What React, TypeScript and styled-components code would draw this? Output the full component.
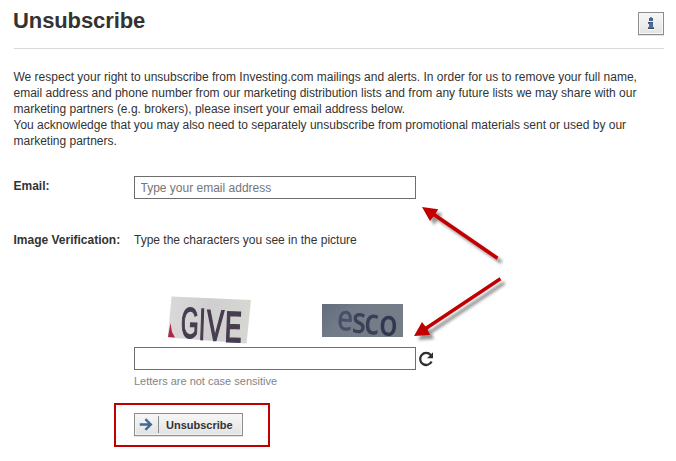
import React from "react";
import styled, { createGlobalStyle } from "styled-components";

const GlobalStyle = createGlobalStyle`
  * { box-sizing: border-box; }
  body {
    margin: 0;
    background: #fff;
    color: #333;
    font: 12px/16px "Liberation Sans", Arial, sans-serif;
  }
`;

const Page = styled.main`
  position: relative;
  width: 676px;
  height: 461px;
  padding: 0 12px 0 13.5px;
  overflow: hidden;
`;

const Header = styled.header`
  display: flex;
  justify-content: space-between;
  align-items: flex-start;
  height: 49px;
  margin-left: 0.5px;
  border-bottom: 1px solid #d9dad9;
`;

const Title = styled.h1`
  margin: 8px 0 0 -1px;
  font-size: 22px;
  line-height: 26px;
  font-weight: bold;
  letter-spacing: -0.1px;
`;

const InfoButton = styled.button`
  display: grid;
  place-items: center;
  width: 26px;
  height: 23px;
  margin-top: 12px;
  padding: 0;
  border: 1px solid #8d8d8d;
  background: linear-gradient(#f7f7f7, #e4e4e4);
  box-shadow: inset 0 0 0 1px #f6f6f6, 0 1px 0 #e4e4e4;
`;

const Intro = styled.p`
  margin: 20px 0 0;
  white-space: nowrap;
`;

const Form = styled.form`
  display: grid;
  grid-template-columns: 120.5px 1fr;
  grid-template-rows: 54px auto;
  margin-top: 27px;
`;

const Label = styled.label`
  padding-top: 2px;
  font-weight: bold;
  white-space: nowrap;
`;

const Field = styled.div`
  display: flex;
  flex-direction: column;
  align-items: flex-start;
`;

const TextInput = styled.input`
  display: block;
  width: 282px;
  height: 23px;
  margin: 0;
  padding: 0 5.5px;
  border: 1px solid #6e6e6e;
  border-radius: 0;
  background: #fff;
  font: 12px "Liberation Sans", Arial, sans-serif;
  color: #333;
  outline: none;
  &::placeholder { color: #757575; opacity: 1; }
`;

const Prompt = styled.div`
  padding-top: 2px;
`;

const Captcha = styled.div`
  display: flex;
  align-items: flex-start;
  gap: 71px;
  height: 51px;
  margin: 48px 0 0 33px;
`;

const CaptchaPicture = styled.svg<{ $drop?: number }>`
  flex: none;
  margin-top: ${({ $drop = 0 }) => $drop}px;
  overflow: visible;
`;

const CaptchaRow = styled.div`
  display: flex;
  align-items: center;
  gap: 2px;
`;

const Hint = styled.div`
  margin-top: 3px;
  font-size: 11px;
  color: #848484;
`;

const Highlight = styled.div`
  width: 156px;
  height: 44px;
  margin: 14px 0 0 -20px;
  padding: 8px 18px;
  border: 2px solid #c00000;
`;

const SubmitButton = styled.button`
  display: flex;
  align-items: center;
  width: 109px;
  height: 23px;
  padding: 0 0 0 4px;
  border: 1px solid #8d8d8d;
  background: linear-gradient(#f7f7f7, #e2e2e2);
  box-shadow: inset 0 0 0 1px #f4f4f4, 0 1px 0 #e4e4e4;
  color: #333;
  font: bold 11px "Liberation Sans", Arial, sans-serif;
`;

const ButtonLabel = styled.span`
  display: flex;
  align-items: center;
  height: 17px;
  margin-left: 5px;
  padding-left: 7px;
  border-left: 1px solid #8c8c8c;
`;

const Annotation = styled.svg`
  position: absolute;
  left: 400px;
  top: 195px;
  pointer-events: none;
`;

const InfoIcon = () => (
  <svg width="8" height="13" viewBox="0 0 8 13" shapeRendering="crispEdges">
    <path d="M2 1h4v3H2z" fill="#45658b" />
    <path d="M3 0h2v1H3z" fill="#7a8da5" />
    <path d="M1 5h5v5h1v2H1v-2h1V7H1z" fill="#45709f" />
    <path d="M1 5h5v1H1zM1 11h6v1H1z" fill="#33506f" />
    <path d="M1 12h6v1H1z" fill="#fff" />
  </svg>
);

const ArrowIcon = () => (
  <svg width="14" height="13" viewBox="0 0 14 13">
    <path d="M.8 6.5h11M6.4 1.2l5.4 5.3-5.4 5.3" fill="none" stroke="#416993" strokeWidth="2.4" />
  </svg>
);

const RefreshIcon = () => (
  <svg width="16" height="16" viewBox="0 0 16 16">
    <path d="M12.7 4A6 6 0 1 0 13.6 10.600" fill="none" stroke="#303030" strokeWidth="2.3" />
    <path d="M15 1.3v6H9z" fill="#303030" />
  </svg>
);

const GiveImage = () => (
  <CaptchaPicture width="84" height="50" viewBox="0 0 84 50">
    <defs>
      <linearGradient id="paper">
        <stop offset="0" stopColor="#dbd8d8" />
        <stop offset=".5" stopColor="#d0ced0" />
        <stop offset="1" stopColor="#d6d8d0" />
      </linearGradient>
      <filter id="ink"><feGaussianBlur stdDeviation=".75" /></filter>
    </defs>
    <path d="M4.5 .5 84 4 79.5 47.5 .8 41.5z" fill="url(#paper)" />
    <g filter="url(#ink)">
      <path d="M3.5 27 5 36 8 41.5 1 41z" fill="#b22645" />
      <g
        fill="#463d50"
        stroke="#463d50"
        strokeWidth="1.5"
        fontFamily="Liberation Sans, Arial, sans-serif"
        fontSize="43"
      >
        <text transform="translate(13.5 41.5) rotate(2) scale(.53 1)">G</text>
        <text transform="translate(32 43) rotate(2) scale(.45 1)" strokeWidth="2.5">I</text>
        <text transform="translate(39.5 44) rotate(2) scale(.58 1)" strokeWidth="2">V</text>
        <text transform="translate(57.500 45.5) rotate(2) scale(.58 1)" strokeWidth="2">E</text>
      </g>
    </g>
  </CaptchaPicture>
);

const EscoImage = () => (
  <CaptchaPicture $drop={8} width="81" height="33" viewBox="0 0 81 33">
    <defs>
      <linearGradient id="slate" x2="1" y2=".4">
        <stop offset="0" stopColor="#636b7d" />
        <stop offset=".4" stopColor="#727b87" />
        <stop offset="1" stopColor="#757e87" />
      </linearGradient>
      <filter id="smudge"><feGaussianBlur stdDeviation=".7" /></filter>
    </defs>
    <path d="M0 0h81v33H0z" fill="url(#slate)" />
    <g filter="url(#smudge)" fontFamily="Open Sans, Noto Sans, sans-serif" fontWeight="600" fontSize="36">
      <text transform="translate(14.5 26) rotate(3) scale(.78 1)" fill="#485069">e</text>
      <text transform="translate(29.5 28.5) rotate(3) scale(.8 1)" fill="#3a4359">s</text>
      <text transform="translate(42 30) rotate(2) scale(.82 1)" fill="#374057">c</text>
      <text transform="translate(57 31.5) rotate(1) scale(.84 1)" fill="#303950">o</text>
    </g>
  </CaptchaPicture>
);

const PointerArrows = () => (
  <Annotation width="130" height="165" viewBox="0 0 130 165">
    <defs>
      <filter id="shadow" x="-20%" y="-20%" width="150%" height="150%">
        <feDropShadow dx="4" dy="4" stdDeviation="1.8" floodColor="#000" floodOpacity=".42" />
      </filter>
    </defs>
    <g fill="#c00000" filter="url(#shadow)">
      <path d="M22 12 38.2 14.2 35.7 18.5 98.5 61.800 96.5 64.8 33.5 21.5 30 26z" />
      <path d="M14 141 22 127 25.5 131.5 99.5 82.3 101.4 85.2 27.5 134.5 30 140z" />
    </g>
  </Annotation>
);

export default function App() {
  return (
    <>
      <GlobalStyle />
      <Page>
        <Header>
          <Title>Unsubscribe</Title>
          <InfoButton type="button" aria-label="Information"><InfoIcon /></InfoButton>
        </Header>
        <Intro>
          We respect your right to unsubscribe from Investing.com mailings and alerts. In order for us to remove your full name,<br />
          email address and phone number from our marketing distribution lists and from any future lists we may share with our<br />
          marketing partners (e.g. brokers), please insert your email address below.<br />
          You acknowledge that you may also need to separately unsubscribe from promotional materials sent or used by our<br />
          marketing partners.
        </Intro>
        <Form>
          <Label htmlFor="email">Email:</Label>
          <Field><TextInput id="email" placeholder="Type your email address" /></Field>
          <Label htmlFor="captcha">Image Verification:</Label>
          <Field>
            <Prompt>Type the characters you see in the picture</Prompt>
            <Captcha><GiveImage /><EscoImage /></Captcha>
            <CaptchaRow><TextInput id="captcha" /><RefreshIcon /></CaptchaRow>
            <Hint>Letters are not case sensitive</Hint>
            <Highlight>
              <SubmitButton type="button"><ArrowIcon /><ButtonLabel>Unsubscribe</ButtonLabel></SubmitButton>
            </Highlight>
          </Field>
        </Form>
        <PointerArrows />
      </Page>
    </>
  );
}
